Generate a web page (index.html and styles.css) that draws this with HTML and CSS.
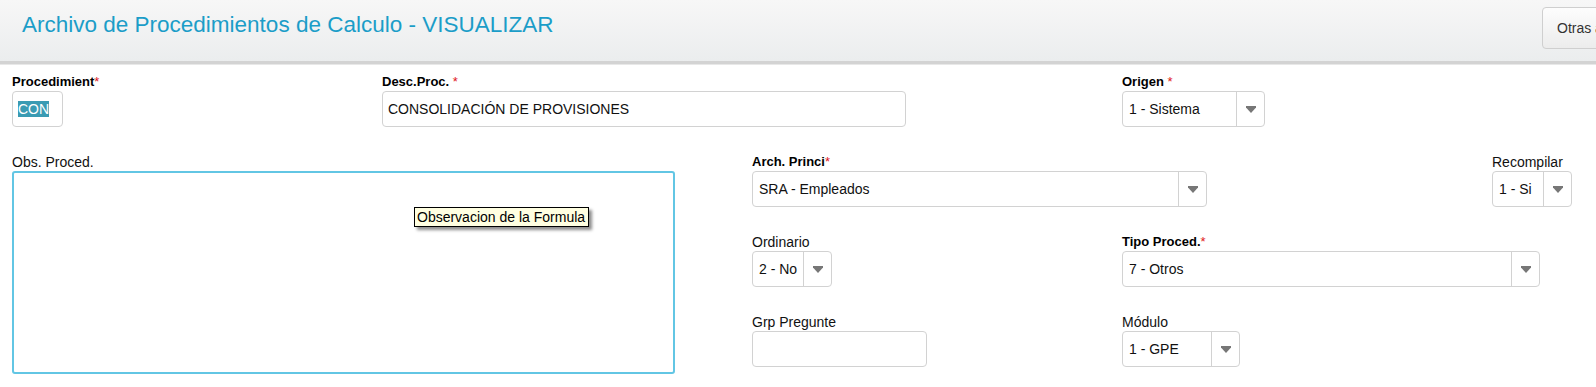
FILE: index.html
```html
<!DOCTYPE html>
<html lang="es">
<head>
<meta charset="utf-8">
<title>Archivo de Procedimientos de Calculo</title>
<link rel="stylesheet" href="styles.css">
</head>
<body>
<header class="topbar">
  <h1 class="title">Archivo de Procedimientos de Calculo - VISUALIZAR</h1>
  <div class="actions"><button class="btn">Otras acciones</button></div>
</header>

<form class="form">
  <div class="field f-proc">
    <div class="label req">Procedimient<span class="ast">*</span></div>
    <div class="input w-proc"><span class="sel">CON</span></div>
  </div>

  <div class="field f-desc">
    <div class="label req">Desc.Proc. <span class="ast">*</span></div>
    <div class="input w-desc">CONSOLIDACIÓN DE PROVISIONES</div>
  </div>

  <div class="field f-origen">
    <div class="label req">Origen <span class="ast">*</span></div>
    <div class="select w-origen"><span class="val">1 - Sistema</span><span class="arrow"><svg width="10" height="7" viewBox="0 0 10 7"><path d="M0 0H10V1.6L5 7L0 1.6Z" fill="#777"/></svg></span></div>
  </div>

  <div class="field f-obs">
    <div class="label">Obs. Proced.</div>
    <div class="obs-wrap">
      <textarea class="textarea" readonly></textarea>
      <div class="tooltip">Observacion de la Formula</div>
    </div>
  </div>

  <div class="field f-arch">
    <div class="label req">Arch. Princi<span class="ast">*</span></div>
    <div class="select w-arch"><span class="val">SRA - Empleados</span><span class="arrow"><svg width="10" height="7" viewBox="0 0 10 7"><path d="M0 0H10V1.6L5 7L0 1.6Z" fill="#777"/></svg></span></div>
  </div>

  <div class="field f-recomp">
    <div class="label">Recompilar</div>
    <div class="select w-small"><span class="val">1 - Si</span><span class="arrow"><svg width="10" height="7" viewBox="0 0 10 7"><path d="M0 0H10V1.6L5 7L0 1.6Z" fill="#777"/></svg></span></div>
  </div>

  <div class="field f-ord">
    <div class="label">Ordinario</div>
    <div class="select w-small"><span class="val">2 - No</span><span class="arrow"><svg width="10" height="7" viewBox="0 0 10 7"><path d="M0 0H10V1.6L5 7L0 1.6Z" fill="#777"/></svg></span></div>
  </div>

  <div class="field f-tipo">
    <div class="label req">Tipo Proced.<span class="ast">*</span></div>
    <div class="select w-tipo"><span class="val">7 - Otros</span><span class="arrow"><svg width="10" height="7" viewBox="0 0 10 7"><path d="M0 0H10V1.6L5 7L0 1.6Z" fill="#777"/></svg></span></div>
  </div>

  <div class="field f-grp">
    <div class="label">Grp Pregunte</div>
    <div class="input w-grp"></div>
  </div>

  <div class="field f-mod">
    <div class="label">Módulo</div>
    <div class="select w-mod"><span class="val">1 - GPE</span><span class="arrow"><svg width="10" height="7" viewBox="0 0 10 7"><path d="M0 0H10V1.6L5 7L0 1.6Z" fill="#777"/></svg></span></div>
  </div>
</form>
</body>
</html>
```

FILE: styles.css
```css
html {
  overflow: hidden;
}
body {
  margin: 0;
  padding: 0;
  min-height: 387px;
  background: #fff;
  font-family: "Liberation Sans", Arial, sans-serif;
  color: #222;
}

.topbar {
  display: grid;
  grid-template-columns: 1fr 54px;
  height: 61px;
  background: linear-gradient(#f7f7f7, #ebedee);
  border-bottom: 3px solid #d3d3d3;
  box-shadow: 0 1px 0 #e8e8e8;
}

.title {
  margin: 0;
  padding: 12px 0 0 22px;
  font-size: 22.5px;
  line-height: 26px;
  font-weight: normal;
  color: #1b9dc8;
  white-space: nowrap;
}

.actions {
  padding-top: 7px;
}

.btn {
  width: max-content;
  height: 42px;
  padding: 0 14px;
  font-family: "Liberation Sans", Arial, sans-serif;
  font-size: 14px;
  color: #333;
  background: linear-gradient(#fdfdfd, #ececec);
  border: 1px solid #cfcfcf;
  border-radius: 4px;
  white-space: nowrap;
}

.form {
  display: grid;
  grid-template-columns: repeat(4, 370px) 1fr;
  grid-template-rows: repeat(4, 54px);
  row-gap: 26px;
  padding: 9px 0 0 12px;
}

.label {
  height: 18px;
  line-height: 18px;
  font-size: 14px;
  color: #111;
  white-space: nowrap;
}
.label.req {
  font-size: 13px;
  font-weight: bold;
  color: #000;
}
.ast {
  color: #e0161b;
  font-weight: normal;
}

.input, .select {
  box-sizing: border-box;
  height: 36px;
  border: 1px solid #d2d2d2;
  border-radius: 4px;
  background: #fff;
  font-size: 14px;
  color: #111;
  white-space: nowrap;
}
.input {
  padding-left: 5px;
  line-height: 34px;
}
.sel {
  background: #3a9bb3;
  color: #fff;
}

.select {
  display: flex;
  align-items: center;
}
.select .val {
  flex: 1;
  padding-left: 6px;
  overflow: hidden;
}
.select .arrow {
  box-sizing: border-box;
  width: 28px;
  height: 100%;
  border-left: 1px solid #d2d2d2;
  display: flex;
  align-items: center;
  justify-content: center;
  padding-top: 1px;
}

/* grid placement */
.f-proc   { grid-column: 1; grid-row: 1; }
.f-desc   { grid-column: 2 / span 2; grid-row: 1; }
.f-origen { grid-column: 4; grid-row: 1; }
.f-obs    { grid-column: 1 / span 2; grid-row: 2 / span 3; }
.f-arch   { grid-column: 3 / span 2; grid-row: 2; }
.f-recomp { grid-column: 5; grid-row: 2; }
.f-ord    { grid-column: 3; grid-row: 3; }
.f-tipo   { grid-column: 4 / span 2; grid-row: 3; }
.f-grp    { grid-column: 3; grid-row: 4; }
.f-mod    { grid-column: 4; grid-row: 4; }

/* widths */
.w-proc   { width: 51px; }
.w-desc   { width: 524px; }
.w-origen { width: 143px; }
.w-arch   { width: 455px; }
.w-small  { width: 80px; }
.w-tipo   { width: 418px; }
.w-grp    { width: 175px; }
.w-mod    { width: 118px; }

.obs-wrap {
  position: relative;
  width: 663px;
  height: 203px;
}
.textarea {
  display: block;
  box-sizing: border-box;
  width: 663px;
  height: 203px;
  margin: 0;
  border: 2px solid #62c6e4;
  border-radius: 3px;
  resize: none;
  outline: none;
  background: #fff;
}
.tooltip {
  position: absolute;
  left: 402px;
  top: 36px;
  padding: 1px 3px 1px 2px;
  background: #ffffe1;
  border: 1px solid #000;
  font-size: 14px;
  line-height: 16px;
  color: #000;
  white-space: nowrap;
  box-shadow: 3px 3px 3px rgba(0, 0, 0, 0.45);
}
```
